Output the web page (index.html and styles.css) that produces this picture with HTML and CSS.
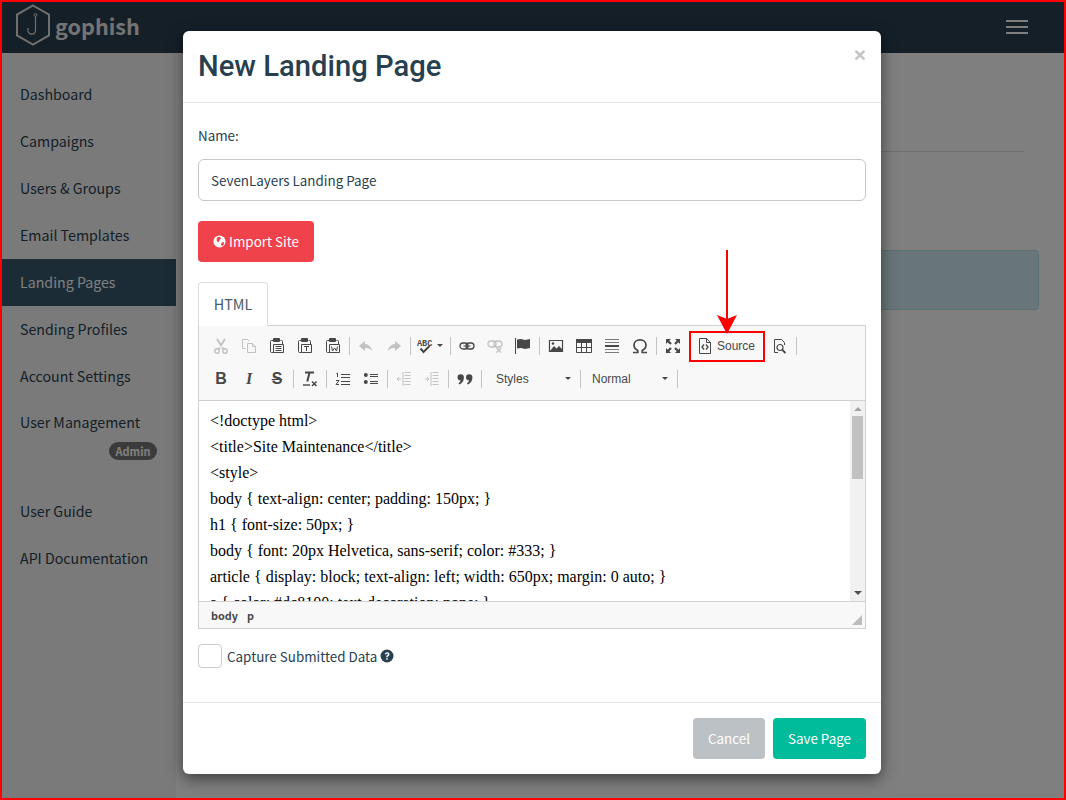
FILE: index.html
```html
<!doctype html>
<html lang="en">
<head>
<meta charset="utf-8">
<title>New Landing Page - gophish</title>
<link rel="stylesheet" href="styles.css">
</head>
<body>
<svg class="sprite" width="0" height="0" aria-hidden="true">
  <symbol id="i-cut" viewBox="0 0 16 16"><path d="M4 1l4.500 7M12 1L7.500 8M7 9.500l-2 2M9 9.500l2 2" fill="none" stroke="currentColor" stroke-width="1.800"/><circle cx="4" cy="13" r="2.200" fill="none" stroke="currentColor" stroke-width="1.400"/><circle cx="12" cy="13" r="2.200" fill="none" stroke="currentColor" stroke-width="1.400"/></symbol>
  <symbol id="i-copy" viewBox="0 0 16 16"><path d="M1.500 1.500h5l2 2M1.500 1.500v9h3M6.500 5.500h5l3 3v6h-8zM11.500 5.500v3h3" fill="none" stroke="currentColor"/></symbol>
  <symbol id="i-paste" viewBox="0 0 16 16"><path d="M4.500 2.500h-2q-1 0-1 1v10q0 1 1 1h2M11.500 2.500h1q1 0 1 1v3" fill="none" stroke="currentColor"/><rect x="4" y="0" width="7" height="4" rx="1" fill="currentColor"/><path d="M4.500 6.500h10v8h-10z" fill="#f8f8f8" stroke="currentColor"/><path d="M6.500 8.500h6M6.500 10.500h6M6.500 12.500h6" stroke="currentColor"/></symbol>
  <symbol id="i-pastet" viewBox="0 0 16 16"><path d="M4.500 2.500h-2q-1 0-1 1v10q0 1 1 1h2M11.500 2.500h1q1 0 1 1v3" fill="none" stroke="currentColor"/><rect x="4" y="0" width="7" height="4" rx="1" fill="currentColor"/><path d="M4.500 6.500h10v8h-10z" fill="#f8f8f8" stroke="currentColor"/><path d="M7 8.500h5M9.500 8.500v4.500" stroke="currentColor"/></symbol>
  <symbol id="i-pastew" viewBox="0 0 16 16"><path d="M4.500 2.500h-2q-1 0-1 1v10q0 1 1 1h2M11.500 2.500h1q1 0 1 1v3" fill="none" stroke="currentColor"/><rect x="4" y="0" width="7" height="4" rx="1" fill="currentColor"/><path d="M4.500 6.500h10v8h-10z" fill="#f8f8f8" stroke="currentColor"/><path d="M6.500 8.500L7.500 13 9.500 10l2 3 1-4.500" fill="none" stroke="currentColor"/></symbol>
  <symbol id="i-undo" viewBox="0 0 16 16"><path d="M7 3L1 8l6 5v-3c3 0 5 .5 7 3-.5-4-3-6.500-7-7z" fill="currentColor"/></symbol>
  <symbol id="i-redo" viewBox="0 0 16 16"><path d="M9 3l6 5-6 5v-3c-3 0-5 .5-7 3 .5-4 3-6.500 7-7z" fill="currentColor"/></symbol>
  <symbol id="i-link" viewBox="0 0 16 16"><rect x="1" y="5" width="8" height="6" rx="3" fill="none" stroke="currentColor" stroke-width="1.300"/><rect x="7" y="5" width="8" height="6" rx="3" fill="none" stroke="currentColor" stroke-width="1.300"/><path d="M4.500 8h7" stroke="currentColor"/></symbol>
  <symbol id="i-unlink" viewBox="0 0 16 16"><rect x="1" y="3" width="8" height="6" rx="3" fill="none" stroke="currentColor" stroke-width="1.300"/><rect x="7" y="3" width="8" height="6" rx="3" fill="none" stroke="currentColor" stroke-width="1.300"/><path d="M9.500 10l4.500 4.500M14 10l-4.500 4.500" stroke="currentColor" stroke-width="1.400"/></symbol>
  <symbol id="i-flag" viewBox="0 0 16 16"><path d="M.5 0v16" stroke="currentColor" stroke-width="1"/><path d="M2 1.500l4-.5 4 1 5-1v9l-5 1-4-1-4 .5z" fill="currentColor"/></symbol>
  <symbol id="i-image" viewBox="0 0 16 16"><path d="M1.500 2.500h13v11h-13z" fill="none" stroke="currentColor" stroke-width="1.200"/><path d="M2 13l4-5 2.500 2.500L11 8l3 3v2.500H2z" fill="currentColor"/><circle cx="5" cy="5.500" r="1.300" fill="currentColor"/></symbol>
  <symbol id="i-table" viewBox="0 0 16 16"><path d="M.5 1.500h15v13H.5z" fill="none" stroke="currentColor"/><path d="M0 1h16v4H0z" fill="currentColor"/><path d="M5.500 5v9M10.500 5v9M1 9.500h14" stroke="currentColor"/></symbol>
  <symbol id="i-hr" viewBox="0 0 16 16"><path d="M1 1.500h14M1 4.500h14M1 11.500h14M1 14.500h14" stroke="currentColor" opacity=".7"/><path d="M1 8h14" stroke="currentColor" stroke-width="2"/></symbol>
  <symbol id="i-omega" viewBox="0 0 16 16"><path d="M1 14.500h4.800v-2C3.300 11.300 2 9.300 2 7c0-3 2.500-5.200 6-5.200S14 4 14 7c0 2.300-1.300 4.300-3.800 5.500v2H15" fill="none" stroke="currentColor" stroke-width="1.700"/></symbol>
  <symbol id="i-max" viewBox="0 0 16 16"><path d="M1 1h5L4.300 2.700l2.500 2.500-1.600 1.600-2.500-2.500L1 6zM15 1v5l-1.700-1.700-2.500 2.500-1.600-1.600 2.500-2.500L10 1zM1 15v-5l1.700 1.700 2.500-2.500 1.600 1.600-2.500 2.500L6 15zM15 15h-5l1.700-1.700-2.500-2.500 1.600-1.600 2.500 2.500L15 10z" fill="currentColor"/></symbol>
  <symbol id="i-source" viewBox="0 0 16 16"><path d="M2.500 .5h7l4 4v11h-11zM9.500 .5v4h4" fill="none" stroke="currentColor"/><path d="M7 6.500L5 9l2 2.500M9 6.500L11 9l-2 2.500" fill="none" stroke="currentColor" stroke-width="1.300"/></symbol>
  <symbol id="i-preview" viewBox="0 0 16 16"><path d="M6 14.500H2.500v-13h7l3 3V7" fill="none" stroke="currentColor"/><circle cx="8" cy="9.500" r="3" fill="none" stroke="currentColor" stroke-width="1.200"/><path d="M10.300 11.800l3.200 3.200" stroke="currentColor" stroke-width="1.800"/></symbol>
  <symbol id="i-tx" viewBox="0 0 16 16"><path d="M3 1.500h9M7.500 1.500L5.300 10.500" fill="none" stroke="currentColor" stroke-width="2"/><path d="M1 14h7" stroke="currentColor" stroke-width="1.400"/><path d="M10 10.500l4.500 4.500M14.500 10.500L10 15" stroke="currentColor" stroke-width="1.500"/></symbol>
  <symbol id="i-ol" viewBox="0 0 16 16"><path d="M6 3.500h9M6 6.500h9M6 10.500h9M6 13.500h9" stroke="currentColor"/><path d="M1.500 2.500l1-.5v4M1 9.500h3L1 13.500h3" fill="none" stroke="currentColor"/></symbol>
  <symbol id="i-ul" viewBox="0 0 16 16"><circle cx="2.800" cy="4" r="2" fill="currentColor"/><circle cx="2.800" cy="11" r="2" fill="currentColor"/><path d="M7 3.500h8M7 5.500h8M7 10.500h8M7 12.500h8" stroke="currentColor"/></symbol>
  <symbol id="i-outdent" viewBox="0 0 16 16"><path d="M8.500 1.500h6M8.500 4.500h6M8.500 7.500h6M8.500 10.500h6M8.500 13.500h6M7 1v14" stroke="currentColor"/><path d="M1 8h4M3 6L1 8l2 2" fill="none" stroke="currentColor"/></symbol>
  <symbol id="i-indent" viewBox="0 0 16 16"><path d="M8.500 1.500h6M8.500 4.500h6M8.500 7.500h6M8.500 10.500h6M8.500 13.500h6M7 1v14" stroke="currentColor"/><path d="M1 8h4M3 6l2 2-2 2" fill="none" stroke="currentColor"/></symbol>
  <symbol id="i-quote" viewBox="0 0 16 16"><path d="M0.500 6.500a3.200 3.200 0 1 1 6.400 0c0 3.500-2 6-4.700 7l-.8-1.300c1.200-.6 2-1.500 2.300-2.700A3.200 3.200 0 0 1 .5 6.500zM9 6.500a3.200 3.200 0 1 1 6.400 0c0 3.500-2 6-4.700 7l-.8-1.300c1.200-.6 2-1.500 2.300-2.700A3.200 3.200 0 0 1 9 6.500z" fill="currentColor"/></symbol>
</svg>

<header class="topbar">
  <a class="brand">
    <svg class="brand-mark" viewBox="0 0 36 42" width="36" height="42" aria-hidden="true">
      <path d="M18 1.500L34 10.700v20.600L18 40.500 2 31.300V10.700z" fill="none" stroke-width="2"/>
      <circle cx="20.500" cy="11" r="1.400" fill="none"/>
      <path d="M20.500 12.500V26c0 5.500-7.500 5.500-7.500 .5V24" fill="none" stroke-width="1.200"/>
    </svg>
    <span class="brand-name">gophish</span>
  </a>
  <div class="burger"><i></i><i></i><i></i></div>
</header>

<div class="shell">
  <nav class="sidebar">
    <a class="nav-item">Dashboard</a>
    <a class="nav-item">Campaigns</a>
    <a class="nav-item">Users &amp; Groups</a>
    <a class="nav-item">Email Templates</a>
    <a class="nav-item nav-active">Landing Pages</a>
    <a class="nav-item">Sending Profiles</a>
    <a class="nav-item">Account Settings</a>
    <a class="nav-item nav-admin">User Management<span class="pill">Admin</span></a>
    <div class="nav-gap"></div>
    <a class="nav-item">User Guide</a>
    <a class="nav-item">API Documentation</a>
  </nav>
  <main class="content">
    <div class="page-rule"></div>
    <div class="notice"></div>
  </main>
</div>

<div class="backdrop"></div>

<section class="modal">
  <div class="modal-head">
    <h2 class="modal-title">New Landing Page</h2>
    <span class="close">×</span>
  </div>
  <div class="modal-body">
    <label class="field-label">Name:</label>
    <input class="text-input" type="text" value="SevenLayers Landing Page">
    <button class="btn btn-danger import"><svg class="globe" viewBox="0 0 14 14" width="13" height="13"><circle cx="7" cy="7" r="6.500" fill="#fff"/><path d="M4 3l3-1 2 1.500-2 2-1 2.500-2-1.500zM9.500 8l2-.5.500 2-2 2.500-1.500-1.500z" fill="#f0424a"/></svg> Import Site</button>
    <div class="tabs"><span class="tab">HTML</span></div>
    <div class="editor">
      <div class="toolbar">
        <div class="tool-row">
          <span class="tb off"><svg><use href="#i-cut"/></svg></span>
          <span class="tb off"><svg><use href="#i-copy"/></svg></span>
          <span class="tb"><svg><use href="#i-paste"/></svg></span>
          <span class="tb"><svg><use href="#i-pastet"/></svg></span>
          <span class="tb"><svg><use href="#i-pastew"/></svg></span>
          <span class="sep"></span>
          <span class="tb off"><svg><use href="#i-undo"/></svg></span>
          <span class="tb off"><svg><use href="#i-redo"/></svg></span>
          <span class="sep"></span>
          <span class="tb tb-spell"><svg viewBox="0 0 16 16"><text class="abc" x="0" y="7.500">ABC</text><path d="M3.500 10.500l3 3.500 6-6" fill="none" stroke="currentColor" stroke-width="2"/></svg><b class="caret"></b></span>
          <span class="sep"></span>
          <span class="tb"><svg><use href="#i-link"/></svg></span>
          <span class="tb off"><svg><use href="#i-unlink"/></svg></span>
          <span class="tb"><svg><use href="#i-flag"/></svg></span>
          <span class="sep"></span>
          <span class="tb"><svg><use href="#i-image"/></svg></span>
          <span class="tb"><svg><use href="#i-table"/></svg></span>
          <span class="tb"><svg><use href="#i-hr"/></svg></span>
          <span class="tb"><svg><use href="#i-omega"/></svg></span>
          <span class="sep"></span>
          <span class="tb"><svg><use href="#i-max"/></svg></span>
          <span class="tb tb-source"><svg><use href="#i-source"/></svg><em>Source</em></span>
          <span class="tb"><svg><use href="#i-preview"/></svg></span>
          <span class="sep"></span>
        </div>
        <div class="tool-row">
          <span class="tb tb-text tb-b">B</span>
          <span class="tb tb-text tb-i">I</span>
          <span class="tb tb-text tb-s">S</span>
          <span class="sep"></span>
          <span class="tb"><svg><use href="#i-tx"/></svg></span>
          <span class="sep"></span>
          <span class="tb"><svg><use href="#i-ol"/></svg></span>
          <span class="tb"><svg><use href="#i-ul"/></svg></span>
          <span class="sep"></span>
          <span class="tb off"><svg><use href="#i-outdent"/></svg></span>
          <span class="tb off"><svg><use href="#i-indent"/></svg></span>
          <span class="sep"></span>
          <span class="tb"><svg><use href="#i-quote"/></svg></span>
          <span class="sep"></span>
          <span class="combo combo-styles"><em>Styles</em><b class="caret"></b></span>
          <span class="sep"></span>
          <span class="combo combo-normal"><em>Normal</em><b class="caret"></b></span>
          <span class="sep"></span>
        </div>
      </div>
      <div class="edit-area">
        <div class="code">
          <p>&lt;!doctype html&gt;</p>
          <p>&lt;title&gt;Site Maintenance&lt;/title&gt;</p>
          <p>&lt;style&gt;</p>
          <p>body { text-align: center; padding: 150px; }</p>
          <p>h1 { font-size: 50px; }</p>
          <p>body { font: 20px Helvetica, sans-serif; color: #333; }</p>
          <p>article { display: block; text-align: left; width: 650px; margin: 0 auto; }</p>
          <p>a { color: #dc8100; text-decoration: none; }</p>
        </div>
        <div class="scrollbar">
          <span class="arrow arrow-up"></span>
          <span class="track"><span class="thumb"></span></span>
          <span class="arrow arrow-down"></span>
        </div>
      </div>
      <div class="statusbar"><span>body</span><span>p</span><i class="resizer"></i></div>
    </div>
    <div class="capture">
      <span class="checkbox"></span>
      <span>Capture Submitted Data</span>
      <svg class="help" viewBox="0 0 14 14" width="14" height="14"><circle cx="7" cy="7" r="6.500" fill="#283f50"/><path d="M4.800 5.300C5 4 6 3.300 7.200 3.300c1.300 0 2.300.8 2.300 2 0 1.800-1.900 1.600-1.900 3H6.200c0-2.200 1.800-2 1.800-3 0-.5-.4-.8-.9-.8-.6 0-.9.400-1 1z M6.200 9.200h1.500v1.500H6.200z" fill="#fff"/></svg>
    </div>
  </div>
  <div class="modal-foot">
    <button class="btn btn-muted">Cancel</button>
    <button class="btn btn-primary">Save Page</button>
  </div>
</section>

<div class="callout-box"></div>
<svg class="callout-arrow" viewBox="0 0 24 84" width="24" height="84" aria-hidden="true"><path d="M12 0v70" stroke="#f00" stroke-width="2"/><path d="M2 65l10 4 10-4-10 19z" fill="#f00"/></svg>
</body>
</html>
```
FILE: styles.css
```css
* { box-sizing: border-box; }
html, body { height: 100%; }
body {
  margin: 0;
  width: 1066px;
  height: 800px;
  overflow: hidden;
  border: 2px solid #f00;
  position: relative;
  background: #fff;
  color: #283f50;
  font-family: "Noto Sans CJK SC", "Source Sans Pro", "Noto Sans", sans-serif;
  font-size: 13.4px;
  display: flex;
  flex-direction: column;
}
.sprite { position: absolute; }
.topbar {
  height: 51px;
  flex: none;
  background: #283f50;
  display: flex;
  align-items: center;
  justify-content: space-between;
  padding: 0 36px 0 13px;
}
.brand { display: flex; align-items: center; gap: 4px; height: 51px; }
.brand-mark { margin-top: -6px; stroke: #e0e0e0; }
.brand-name { color: #e8e8e8; font-size: 21.6px; font-weight: 700; line-height: 1; margin-top: -3px; }
.burger { display: flex; flex-direction: column; gap: 4px; margin-top: -1px; }
.burger i { display: block; width: 22px; height: 2px; background: #fff; }
.shell { flex: 1; display: flex; min-height: 0; }
.sidebar {
  width: 174px;
  flex: none;
  background: #f5f5f5;
  padding-top: 18px;
  display: flex;
  flex-direction: column;
  font-size: 14.2px;
}
.nav-item {
  display: flex;
  align-items: center;
  height: 47px;
  padding-left: 18px;
  color: #283f50;
  line-height: 1;
}
.nav-active { background: #37586f; color: #fff; }
.nav-admin { height: 68px; display: block; padding-top: 15px; }
.pill {
  display: block;
  width: 48px;
  height: 18px;
  margin: 13px 19px 0 auto;
  border-radius: 9px;
  background: #777;
  color: #fff;
  font-size: 11px;
  font-weight: 700;
  line-height: 18px;
  text-align: center;
}
.nav-gap { height: 20px; }
.content { flex: 1; padding: 98px 40px 0 28px; }
.page-rule { height: 1px; background: #ddd; }
.notice {
  margin-top: 98px;
  margin-right: -15px;
  height: 60px;
  background: #d1edf4;
  border: 1px solid #b0e0e0;
  border-radius: 4px;
}
.backdrop { position: absolute; inset: 0; background: rgba(0, 0, 0, .5); }
.modal {
  position: absolute;
  left: 181px;
  top: 29px;
  width: 698px;
  height: 743px;
  background: #fff;
  border-radius: 6px;
  box-shadow: 0 5px 15px rgba(0, 0, 0, .5);
  display: flex;
  flex-direction: column;
}
.modal-head {
  height: 72px;
  flex: none;
  border-bottom: 1px solid #e5e5e5;
  padding: 0 15px;
  display: flex;
  justify-content: space-between;
}
.modal-title {
  margin: 18px 0 0;
  font-family: Roboto, sans-serif;
  font-weight: 500;
  font-size: 29.2px;
  line-height: 34px;
  color: #283f50;
}
.close { color: #c4c4c4; font-family: "Liberation Sans", sans-serif; font-size: 21px; font-weight: 700; line-height: 1; margin-top: 13px; }
.modal-body { flex: 1; padding: 21px 15px 0; display: flex; flex-direction: column; align-items: flex-start; }
.field-label { line-height: 22px; height: 22px; }
.text-input {
  margin-top: 13px;
  width: 668px;
  height: 42px;
  border: 1px solid #c8c8c8;
  border-radius: 6px;
  padding: 0 12px;
  font: inherit;
  color: #283f50;
  background: #fff;
}
.btn {
  border: 0;
  border-radius: 4px;
  color: #fff;
  font: inherit;
  height: 41px;
  padding: 0 15px 2px;
}
.import { margin-top: 20px; width: 116px; padding: 0 0 1px; display: flex; align-items: center; justify-content: center; gap: 3px; }
.btn-danger { background: #f0424a; }
.btn-muted { background: #bcc1c5; width: 72px; }
.btn-primary { background: #00bc9b; width: 93px; }
.tabs { margin-top: 20px; height: 44px; width: 668px; flex: none; }
.tab {
  display: flex;
  align-items: center;
  justify-content: center;
  width: 70px;
  height: 44px;
  padding-bottom: 2px;
  background: #fff;
  border: 1px solid #ddd;
  border-bottom: 0;
  border-radius: 4px 4px 0 0;
  color: #4c5b66;
  font-size: 14.4px;
  position: relative;
  z-index: 1;
}
.editor {
  margin-top: -1px;
  width: 668px;
  height: 304px;
  flex: none;
  border: 1px solid #d1d1d1;
  display: flex;
  flex-direction: column;
}
.toolbar {
  height: 75px;
  flex: none;
  background: #f8f8f8;
  border-bottom: 1px solid #d1d1d1;
  padding: 3px 0 0 8px;
}
.tool-row { display: flex; align-items: center; height: 33px; color: #474747; font-family: "Liberation Sans", sans-serif; font-size: 12px; }
.tb { width: 28px; height: 33px; flex: none; display: flex; align-items: center; justify-content: center; }
.tb svg { width: 16px; height: 16px; display: block; }
.off { opacity: .3; }
.sep { width: 1px; height: 18px; background: #c4c4c4; margin: 0 2px; flex: none; }
.tb-spell { width: 35px; gap: 4px; justify-content: flex-start; padding-left: 4px; }
.abc { font-family: "Liberation Mono", monospace; font-size: 8.5px; font-weight: 700; fill: currentColor; }
.caret { display: block; width: 0; height: 0; border: 3px solid transparent; border-top: 3px solid #474747; border-bottom: 0; }
.tb-source { width: 79px; justify-content: flex-start; padding-left: 10px; gap: 4px; }
.tb-source em, .combo em { font-style: normal; color: #484848; }
.tb-text { font-size: 16px; color: #474747; font-weight: 700; }
.tb-b { font-family: "Liberation Sans", sans-serif; }
.tb-i { font-family: "Liberation Serif", serif; font-style: italic; }
.tb-s { text-decoration: line-through; font-family: "Liberation Sans", sans-serif; }
.combo { display: flex; align-items: center; justify-content: space-between; height: 33px; flex: none; padding-left: 12px; padding-right: 7px; }
.combo-styles { width: 94px; }
.combo-normal { width: 92px; padding-left: 9px; }
.edit-area { flex: 1; min-height: 0; display: flex; background: #fff; }
.code {
  flex: 1;
  overflow: hidden;
  padding: 7px 0 0 11px;
  font-family: "Liberation Serif", serif;
  font-size: 16px;
  line-height: 26px;
  color: #000;
}
.code p { margin: 0; white-space: nowrap; }
.scrollbar { width: 15px; flex: none; background: #f1f1f1; display: flex; flex-direction: column; align-items: center; }
.arrow { display: block; flex: none; width: 0; height: 0; border-left: 4px solid transparent; border-right: 4px solid transparent; }
.arrow-up { margin: 6px 0 5px; border-bottom: 4px solid #a3a3a3; }
.arrow-down { margin: 5px 0 6px; border-top: 4px solid #505050; }
.track { flex: 1; width: 100%; padding: 0 2px; display: block; }
.thumb { display: block; height: 63px; background: #c1c1c1; }
.statusbar {
  height: 27px;
  flex: none;
  background: #f8f8f8;
  border-top: 1px solid #d1d1d1;
  padding-left: 12px;
  display: flex;
  align-items: center;
  gap: 9px;
  font-size: 10.8px;
  font-weight: 700;
  color: #484848;
  position: relative;
}
.resizer {
  position: absolute;
  right: 3px;
  bottom: 3px;
  border-style: solid;
  border-width: 0 0 10px 10px;
  border-color: transparent transparent #bdbdbd transparent;
}
.capture { margin-top: 15px; display: flex; align-items: center; height: 24px; gap: 5px; }
.checkbox { width: 24px; height: 24px; border: 1px solid #ccc; border-radius: 4px; background: #fff; }
.help { margin-left: -2px; }
.modal-foot {
  height: 72px;
  flex: none;
  border-top: 1px solid #e5e5e5;
  padding: 15px;
  display: flex;
  justify-content: flex-end;
  gap: 8px;
}
.callout-box {
  position: absolute;
  left: 687px;
  top: 329px;
  width: 76px;
  height: 31px;
  border: 2px solid #f00;
}
.callout-arrow { position: absolute; left: 713px; top: 248px; }
```
